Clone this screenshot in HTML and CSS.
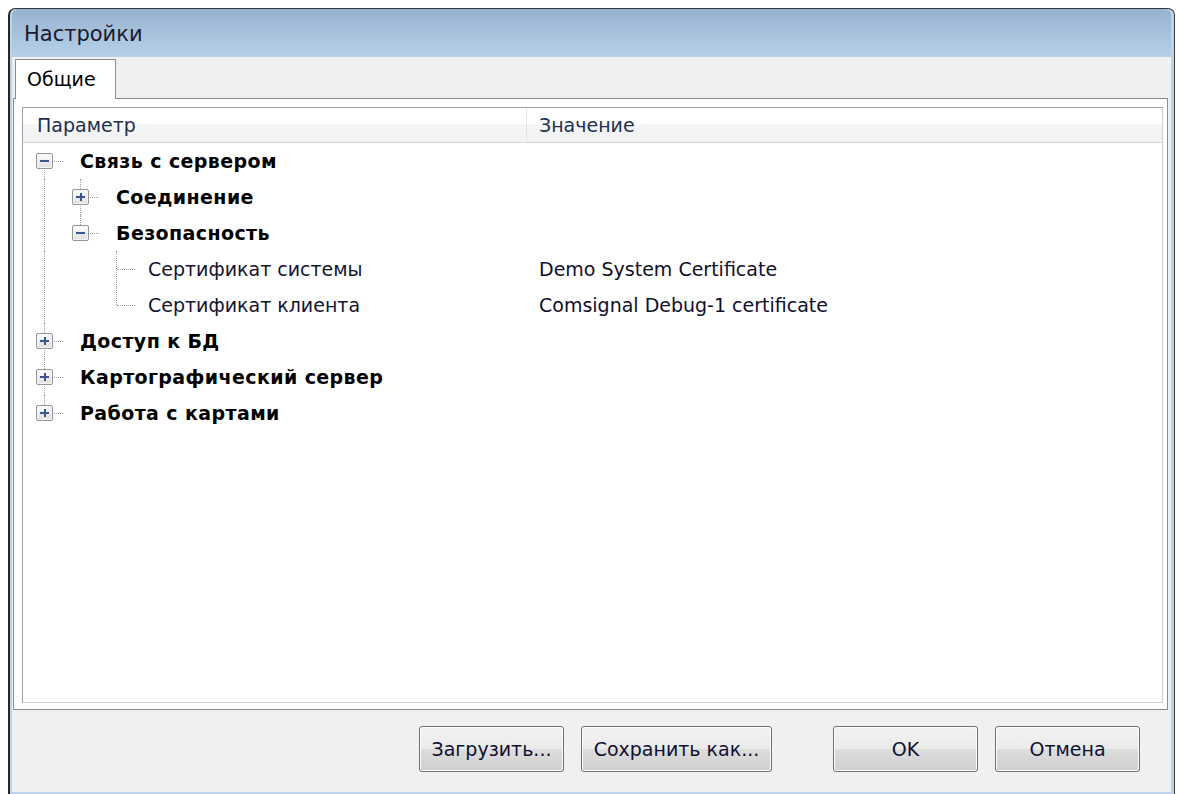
FILE: index.html
```html
<!DOCTYPE html>
<html lang="ru">
<head>
<meta charset="utf-8">
<title>Настройки</title>
<link rel="stylesheet" href="styles.css">
</head>
<body>
<div class="window">
  <div class="titlebar"><span class="title">Настройки</span></div>
  <div class="client">
    <div class="tabstrip">
      <div class="tab">Общие</div>
    </div>
    <div class="tabpanel">
      <div class="tree">
        <div class="tree-header">
          <div class="col col-name">Параметр</div>
          <div class="col col-value">Значение</div>
        </div>
        <div class="tree-body">
          <div class="row group">
            <div class="cell-name">
              <span class="g g-first"><span class="box"></span></span>
              <span class="label">Связь с сервером</span>
            </div>
            <div class="cell-value"></div>
          </div>
          <div class="row group">
            <div class="cell-name">
              <span class="g g-pass"></span>
              <span class="g g-mid"><span class="box plus"></span></span>
              <span class="label">Соединение</span>
            </div>
            <div class="cell-value"></div>
          </div>
          <div class="row group">
            <div class="cell-name">
              <span class="g g-pass"></span>
              <span class="g g-last"><span class="box"></span></span>
              <span class="label">Безопасность</span>
            </div>
            <div class="cell-value"></div>
          </div>
          <div class="row leaf">
            <div class="cell-name">
              <span class="g g-pass"></span>
              <span class="g"></span>
              <span class="g g-mid"></span>
              <span class="label">Сертификат системы</span>
            </div>
            <div class="cell-value">Demo System Certificate</div>
          </div>
          <div class="row leaf">
            <div class="cell-name">
              <span class="g g-pass"></span>
              <span class="g"></span>
              <span class="g g-last"></span>
              <span class="label">Сертификат клиента</span>
            </div>
            <div class="cell-value">Comsignal Debug-1 certificate</div>
          </div>
          <div class="row group">
            <div class="cell-name">
              <span class="g g-mid"><span class="box plus"></span></span>
              <span class="label">Доступ к БД</span>
            </div>
            <div class="cell-value"></div>
          </div>
          <div class="row group">
            <div class="cell-name">
              <span class="g g-mid"><span class="box plus"></span></span>
              <span class="label">Картографический сервер</span>
            </div>
            <div class="cell-value"></div>
          </div>
          <div class="row group">
            <div class="cell-name">
              <span class="g g-last"><span class="box plus"></span></span>
              <span class="label">Работа с картами</span>
            </div>
            <div class="cell-value"></div>
          </div>
        </div>
      </div>
    </div>
    <div class="buttons">
      <button class="btn btn-load">Загрузить...</button>
      <button class="btn btn-save">Сохранить как...</button>
      <button class="btn btn-ok">OK</button>
      <button class="btn btn-cancel">Отмена</button>
    </div>
  </div>
</div>
</body>
</html>
```
FILE: styles.css
```css
* { box-sizing: border-box; }

html, body {
  margin: 0;
  padding: 0;
  background: #ffffff;
}

body {
  padding: 8px 3px 0 8px;
  font-family: "DejaVu Sans", Tahoma, sans-serif;
  font-size: 19px;
  color: #000;
}

/* Aero-style dialog frame */
.window {
  height: 786px;
  border: 1px solid #3a3a3a;
  border-left: 2px solid #262626;
  border-bottom: none;
  border-radius: 7px 7px 0 0;
  background: #bcd3eb;
  padding: 0 3px 2px 2px;
  display: flex;
  flex-direction: column;
}

.titlebar {
  height: 48px;
  flex: none;
  display: flex;
  align-items: center;
  padding: 2px 0 0 12px;
  background: linear-gradient(#97b2d1, #b8d0e9);
  border-radius: 6px 6px 0 0;
}

.title {
  font-size: 21px;
  color: #1b1b2c;
}

.client {
  flex: 1;
  background: #f0f0f0;
  display: flex;
  flex-direction: column;
  padding: 0 3px 0 1px;
}

/* tabs */
.tabstrip {
  height: 41px;
  flex: none;
  display: flex;
  align-items: flex-end;
  padding-left: 2px;
}

.tab {
  height: 40px;
  width: 101px;
  border: 1px solid #898c95;
  border-bottom: none;
  background: #ffffff;
  padding: 8px 0 0 11px;
  margin-bottom: -1px;
  position: relative;
  z-index: 1;
}

.tabpanel {
  height: 612px;
  flex: none;
  border: 1px solid #898c95;
  background: #ffffff;
  padding: 8px 4px 6px 8px;
  display: flex;
}

/* tree list */
.tree {
  flex: 1;
  border: 1px solid #a0a0a0;
  border-right-color: #cfcfcf;
  border-bottom-color: #cfcfcf;
  display: flex;
  flex-direction: column;
  overflow: hidden;
}

.tree-header {
  height: 35px;
  flex: none;
  display: flex;
  background: linear-gradient(#ffffff 0%, #ffffff 45%, #f4f5f6 50%, #f1f2f4 100%);
  border-bottom: 1px solid #d5d5d5;
}

.col {
  display: flex;
  align-items: center;
  color: #1e3050;
}

.col-name {
  width: 504px;
  padding-left: 14px;
  border-right: 1px solid #e3e4e6;
}

.col-value {
  flex: 1;
  padding-left: 12px;
}

.row {
  height: 36px;
  display: grid;
  grid-template-columns: 504px 1fr;
  align-items: center;
}

.cell-name {
  display: flex;
  align-items: center;
  height: 100%;
  padding-left: 1px;
  white-space: nowrap;
}

.cell-value {
  padding-left: 12px;
  white-space: nowrap;
  color: #0f0f2a;
}

/* one indentation step with its dotted connectors */
.g {
  width: 36px;
  height: 100%;
  position: relative;
  flex: none;
}

.g-pass::before,
.g-mid::before,
.g-last::before,
.g-first::before {
  content: "";
  position: absolute;
  left: 20px;
  border-left: 1px dotted #a0a0a0;
}

.g-pass::before,
.g-mid::before { top: 0; bottom: 0; }
.g-last::before { top: 0; height: 50%; }
.g-first::before { top: 50%; bottom: 0; }

.g-mid::after,
.g-last::after,
.g-first::after {
  content: "";
  position: absolute;
  left: 21px;
  top: 50%;
  width: 18px;
  border-top: 1px dotted #a0a0a0;
}

/* expand / collapse box */
.box {
  position: absolute;
  left: 12px;
  top: 10px;
  width: 17px;
  height: 16px;
  border: 1px solid #969696;
  border-radius: 2px;
  background: linear-gradient(#ffffff, #dedede);
  box-shadow: inset 0 0 0 1px #f7f7f7;
  z-index: 1;
}

.box::before,
.box::after {
  content: "";
  position: absolute;
  background: #3a5490;
}

.box::before {
  left: 3px;
  right: 3px;
  top: 6px;
  height: 2px;
}

.plus::after {
  top: 3px;
  bottom: 3px;
  left: 6.5px;
  width: 2px;
}

.label { margin-left: 20px; }

.leaf .label {
  margin-left: 16px;
  color: #141430;
}

.group .label {
  font-weight: bold;
  letter-spacing: 0.4px;
}

/* command buttons */
.buttons {
  flex: 1;
  display: flex;
  align-items: flex-start;
  padding: 16px 0 0 406px;
}

.btn {
  height: 46px;
  font-family: "DejaVu Sans", Tahoma, sans-serif;
  font-size: 19px;
  color: #101030;
  border: 1px solid #707070;
  border-radius: 3px;
  background: linear-gradient(#f2f2f2 0%, #ebebeb 50%, #dddddd 51%, #cfcfcf 100%);
  box-shadow: inset 0 0 0 1px #fcfcfc;
  padding: 0;
}

.btn-load { width: 145px; }
.btn-save { width: 191px; margin-left: 17px; }
.btn-ok { width: 145px; margin-left: 61px; }
.btn-cancel { width: 145px; margin-left: 17px; }
```
